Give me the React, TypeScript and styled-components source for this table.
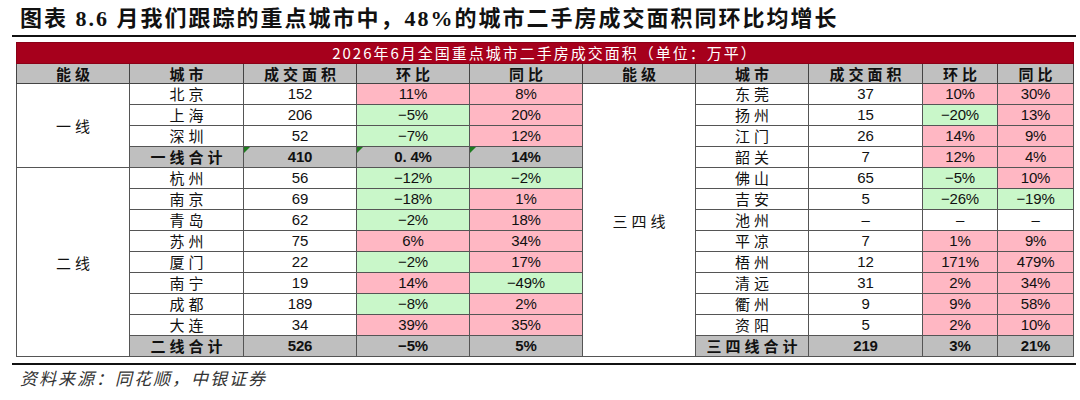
import React from "react";
import styled, { createGlobalStyle, css } from "styled-components";

type Tone = "white" | "pink" | "green" | "gray";

interface Row {
  city: string;
  area: string;
  mom: string;
  yoy: string;
  total?: boolean;
  flag?: boolean;
}

interface Tier {
  name: string;
  rows: Row[];
}

const leftTiers: Tier[] = [
  {
    name: "一线",
    rows: [
      { city: "北京", area: "152", mom: "11%", yoy: "8%" },
      { city: "上海", area: "206", mom: "−5%", yoy: "20%" },
      { city: "深圳", area: "52", mom: "−7%", yoy: "12%" },
      { city: "一线合计", area: "410", mom: "0. 4%", yoy: "14%", total: true, flag: true },
    ],
  },
  {
    name: "二线",
    rows: [
      { city: "杭州", area: "56", mom: "−12%", yoy: "−2%" },
      { city: "南京", area: "69", mom: "−18%", yoy: "1%" },
      { city: "青岛", area: "62", mom: "−2%", yoy: "18%" },
      { city: "苏州", area: "75", mom: "6%", yoy: "34%" },
      { city: "厦门", area: "22", mom: "−2%", yoy: "17%" },
      { city: "南宁", area: "19", mom: "14%", yoy: "−49%" },
      { city: "成都", area: "189", mom: "−8%", yoy: "2%" },
      { city: "大连", area: "34", mom: "39%", yoy: "35%" },
      { city: "二线合计", area: "526", mom: "−5%", yoy: "5%", total: true },
    ],
  },
];

const rightTiers: Tier[] = [
  {
    name: "三四线",
    rows: [
      { city: "东莞", area: "37", mom: "10%", yoy: "30%" },
      { city: "扬州", area: "15", mom: "−20%", yoy: "13%" },
      { city: "江门", area: "26", mom: "14%", yoy: "9%" },
      { city: "韶关", area: "7", mom: "12%", yoy: "4%" },
      { city: "佛山", area: "65", mom: "−5%", yoy: "10%" },
      { city: "吉安", area: "5", mom: "−26%", yoy: "−19%" },
      { city: "池州", area: "–", mom: "–", yoy: "–" },
      { city: "平凉", area: "7", mom: "1%", yoy: "9%" },
      { city: "梧州", area: "12", mom: "171%", yoy: "479%" },
      { city: "清远", area: "31", mom: "2%", yoy: "34%" },
      { city: "衢州", area: "9", mom: "9%", yoy: "58%" },
      { city: "资阳", area: "5", mom: "2%", yoy: "10%" },
      { city: "三四线合计", area: "219", mom: "3%", yoy: "21%", total: true },
    ],
  },
];

const headers = ["能级", "城市", "成交面积", "环比", "同比"];

const tones: Record<Tone, string> = {
  white: "#ffffff",
  pink: "#ffb7c3",
  green: "#c9f7c9",
  gray: "#bfbfbf",
};

const GlobalStyle = createGlobalStyle`
  body {
    margin: 0;
    background: #fff;
  }
`;

const Page = styled.div`
  width: 1080px;
  height: 400px;
  box-sizing: border-box;
  padding: 4px 4px 0 12px;
  font-family: "Noto Sans CJK SC", sans-serif;
  color: #111;
  overflow: hidden;
`;

const Title = styled.h1`
  margin: 0;
  padding-left: 8px;
  height: 31px;
  line-height: 30px;
  font-family: "Liberation Serif", "Noto Sans CJK SC", serif;
  font-size: 22px;
  font-weight: 700;
  letter-spacing: 2px;
  border-bottom: 2px solid #111;
`;

const Table = styled.table`
  margin: 5px 0 0 4px;
  width: 1057px;
  border-collapse: collapse;
  table-layout: fixed;
`;

const Caption = styled.td`
  height: 20px;
  padding: 0;
  background: #a6001c;
  color: #fff;
  font-size: 15px;
  line-height: 20px;
  letter-spacing: 2px;
  text-align: center;
  border: 1px solid #8a0017;
`;

const Head = styled.th`
  height: 19px;
  padding: 0;
  background: #c0c0c0;
  font-size: 15px;
  font-weight: 700;
  line-height: 19px;
  letter-spacing: 4px;
  text-indent: 4px;
  text-align: center;
  border: 1px solid #444;
`;

const Cell = styled.td<{ $tone?: Tone; $kind?: "cjk" | "num"; $bold?: boolean; $flag?: boolean }>`
  position: relative;
  height: 20px;
  padding: 0;
  background: ${({ $tone = "white" }) => tones[$tone]};
  line-height: 20px;
  text-align: center;
  white-space: nowrap;
  border: 1px solid #555;
  font-weight: ${({ $bold }) => ($bold ? 700 : 400)};
  ${({ $kind = "cjk" }) =>
    $kind === "cjk"
      ? css`
          font-size: 15px;
          letter-spacing: 4px;
          text-indent: 4px;
        `
      : css`
          font-family: "Liberation Sans", "Noto Sans CJK SC", sans-serif;
          font-size: 15px;
          letter-spacing: -0.2px;
        `}
  ${({ $flag }) =>
    $flag &&
    css`
      &::before {
        content: "";
        position: absolute;
        top: 0;
        left: 0;
        border-top: 6px solid #1e7b1e;
        border-right: 6px solid transparent;
      }
    `}
`;

const TierCell = styled.td`
  padding: 0;
  background: #fff;
  font-size: 15px;
  letter-spacing: 4px;
  text-indent: 4px;
  text-align: center;
  vertical-align: middle;
  border: 1px solid #555;
`;

const SourceRule = styled.div`
  margin-top: 6px;
  border-top: 2px solid #111;
`;

const Source = styled.p`
  margin: 2px 0 0 8px;
  font-size: 17px;
  font-style: italic;
  letter-spacing: 2px;
  line-height: 22px;
  color: #333;
`;

const pctTone = (v: string, total?: boolean): Tone => {
  if (total) return "gray";
  if (v === "–") return "white";
  return v.startsWith("−") ? "green" : "pink";
};

const flatten = (tiers: Tier[]) =>
  tiers.flatMap((t) =>
    t.rows.map((r, i) => ({ row: r, tier: i === 0 ? t : undefined }))
  );

const renderPart = (entry: { row: Row; tier?: Tier }, side: string) => {
  const { row, tier } = entry;
  const tone: Tone = row.total ? "gray" : "white";
  return (
    <React.Fragment key={side}>
      {tier && <TierCell rowSpan={tier.rows.length}>{tier.name}</TierCell>}
      <Cell $tone={tone} $bold={row.total}>
        {row.city}
      </Cell>
      <Cell $tone={tone} $kind="num" $bold={row.total} $flag={row.flag}>
        {row.area}
      </Cell>
      <Cell $tone={pctTone(row.mom, row.total)} $kind="num" $bold={row.total} $flag={row.flag}>
        {row.mom}
      </Cell>
      <Cell $tone={pctTone(row.yoy, row.total)} $kind="num" $bold={row.total} $flag={row.flag}>
        {row.yoy}
      </Cell>
    </React.Fragment>
  );
};

const colWidths = [113, 114, 113, 113, 113, 113, 113, 114, 75, 76];

export default function App() {
  const left = flatten(leftTiers);
  const right = flatten(rightTiers);

  return (
    <Page>
      <GlobalStyle />
      <Title>图表 8.6 月我们跟踪的重点城市中，48%的城市二手房成交面积同环比均增长</Title>
      <Table>
        <colgroup>
          {colWidths.map((w, i) => (
            <col key={i} style={{ width: w }} />
          ))}
        </colgroup>
        <tbody>
          <tr>
            <Caption colSpan={10}>2026年6月全国重点城市二手房成交面积（单位：万平）</Caption>
          </tr>
          <tr>
            {[...headers, ...headers].map((h, i) => (
              <Head key={i}>{h}</Head>
            ))}
          </tr>
          {left.map((entry, i) => (
            <tr key={i}>
              {renderPart(entry, "l")}
              {renderPart(right[i], "r")}
            </tr>
          ))}
        </tbody>
      </Table>
      <SourceRule />
      <Source>资料来源：同花顺，中银证券</Source>
    </Page>
  );
}
